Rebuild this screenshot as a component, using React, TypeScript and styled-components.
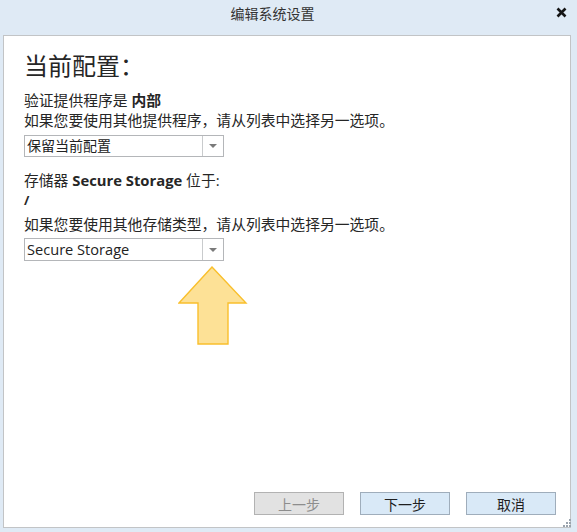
import React from 'react';
import styled, { createGlobalStyle } from 'styled-components';

const GlobalStyle = createGlobalStyle`
  html, body {
    margin: 0;
    padding: 0;
    background: #dfeaf5;
  }
  body {
    font-family: "Open Sans", "Noto Sans CJK SC", sans-serif;
    color: #262626;
  }
`;

const App: React.FC = () => (
  <Window>
    <GlobalStyle />
    <TitleBar>
      <Title>编辑系统设置</Title>
      <CloseButton aria-label="close">
        <svg width="11" height="11" viewBox="0 0 11 11">
          <path d="M1.5 1.5 L9.5 9.5 M9.5 1.5 L1.5 9.5" stroke="#151515" strokeWidth="2.6" />
        </svg>
      </CloseButton>
    </TitleBar>

    <Panel>
      <Content>
        <Heading>当前配置：</Heading>
        <Line $gap={9}>
          验证提供程序是 <b>内部</b>
        </Line>
        <Line>如果您要使用其他提供程序，请从列表中选择另一选项。</Line>
        <Select $gap={5}>
          <SelectValue>保留当前配置</SelectValue>
          <SelectArrow>
            <Caret />
          </SelectArrow>
        </Select>

        <StoreLine $gap={14}>
          存储器 <b>Secure Storage</b> 位于:
        </StoreLine>
        <PathLine>/</PathLine>
        <Line $gap={5}>如果您要使用其他存储类型，请从列表中选择另一选项。</Line>
        <Select $gap={4} $tall>
          <SelectValue $latin>Secure Storage</SelectValue>
          <SelectArrow>
            <Caret />
          </SelectArrow>
        </Select>

        <Pointer>
          <svg width="70" height="80" viewBox="0 0 70 80">
            <path
              d="M34 1 L1 37 L20 37 L20 78 L50 78 L50 37 L68 37 Z"
              fill="#fde196"
              stroke="#f9bf2c"
              strokeWidth="1.4"
              strokeLinejoin="miter"
            />
          </svg>
        </Pointer>
      </Content>

      <Footer>
        <Button disabled>上一步</Button>
        <Button>下一步</Button>
        <Button>取消</Button>
      </Footer>
    </Panel>

    <Grip>
      <svg width="10" height="10" viewBox="0 0 10 10">
        <rect x="7" y="1" width="2" height="2" fill="#9aa4ae" />
        <rect x="4" y="4" width="2" height="2" fill="#9aa4ae" />
        <rect x="7" y="4" width="2" height="2" fill="#9aa4ae" />
        <rect x="1" y="7" width="2" height="2" fill="#9aa4ae" />
        <rect x="4" y="7" width="2" height="2" fill="#9aa4ae" />
        <rect x="7" y="7" width="2" height="2" fill="#9aa4ae" />
      </svg>
    </Grip>
  </Window>
);

export default App;

const Window = styled.div`
  position: relative;
  width: 577px;
  height: 532px;
  display: flex;
  flex-direction: column;
  background: #dfeaf5;
  box-sizing: border-box;
`;

const TitleBar = styled.div`
  height: 24px;
  display: flex;
  align-items: center;
`;

const Title = styled.div`
  flex: 1;
  text-align: center;
  font-size: 14px;
  color: #333;
  padding-top: 1px;
`;

const CloseButton = styled.div`
  width: 32px;
  height: 24px;
  display: flex;
  align-items: center;
  justify-content: center;
  padding-top: 1px;
`;

const Panel = styled.div`
  flex: 1;
  margin: 11px 6px 4px 3px;
  background: #fff;
  border: 1px solid #c2c4c6;
  display: flex;
  flex-direction: column;
  min-height: 0;
`;

const Content = styled.div`
  display: flex;
  flex-direction: column;
  align-items: flex-start;
  padding: 15px 0 0 20px;
`;

const Heading = styled.div`
  font-size: 24px;
  line-height: 30px;
  color: #262626;
`;

const Line = styled.div<{ $gap?: number }>`
  font-size: 14.8px;
  line-height: 20px;
  margin-top: ${(p) => p.$gap ?? 0}px;
  b {
    font-weight: 700;
  }
`;

const StoreLine = styled.div<{ $gap?: number }>`
  font-size: 14.8px;
  line-height: 18px;
  margin-top: ${(p) => p.$gap ?? 0}px;
  b {
    font-weight: 700;
  }
`;

const PathLine = styled.div`
  font-size: 13px;
  font-weight: 700;
  line-height: 18px;
  margin-top: 2px;
`;

const Select = styled.div<{ $gap: number; $tall?: boolean }>`
  margin-top: ${(p) => p.$gap}px;
  width: 200px;
  height: ${(p) => (p.$tall ? 23 : 22)}px;
  box-sizing: border-box;
  border: 1px solid #b4b6b9;
  display: flex;
  background: #fff;
`;

const SelectValue = styled.div<{ $latin?: boolean }>`
  flex: 1;
  padding-left: 2px;
  font-size: ${(p) => (p.$latin ? 14.6 : 14)}px;
  line-height: 20px;
  color: #222;
  white-space: nowrap;
`;

const SelectArrow = styled.div`
  width: 20px;
  border-left: 1px solid #c9cbcd;
  display: flex;
  align-items: center;
  justify-content: center;
`;

const Caret = styled.span`
  width: 0;
  height: 0;
  border-left: 4px solid transparent;
  border-right: 4px solid transparent;
  border-top: 4px solid #7a7a7a;
`;

const Pointer = styled.div`
  margin: 5px 0 0 154px;
  line-height: 0;
`;

const Footer = styled.div`
  margin-top: auto;
  display: flex;
  justify-content: flex-end;
  gap: 16px;
  padding: 0 14px 12px 0;
`;

const Button = styled.button`
  width: 90px;
  height: 23px;
  box-sizing: border-box;
  padding: 0;
  font-family: "Open Sans", "Noto Sans CJK SC", sans-serif;
  font-size: 14px;
  color: #1f1f1f;
  background: #d9e9f7;
  border: 1px solid #9fadbb;
  &:disabled {
    color: #8d8d8d;
    background: #e2e2e2;
    border-color: #b2b2b2;
  }
`;

const Grip = styled.div`
  position: absolute;
  right: 5px;
  bottom: 4px;
  line-height: 0;
`;
